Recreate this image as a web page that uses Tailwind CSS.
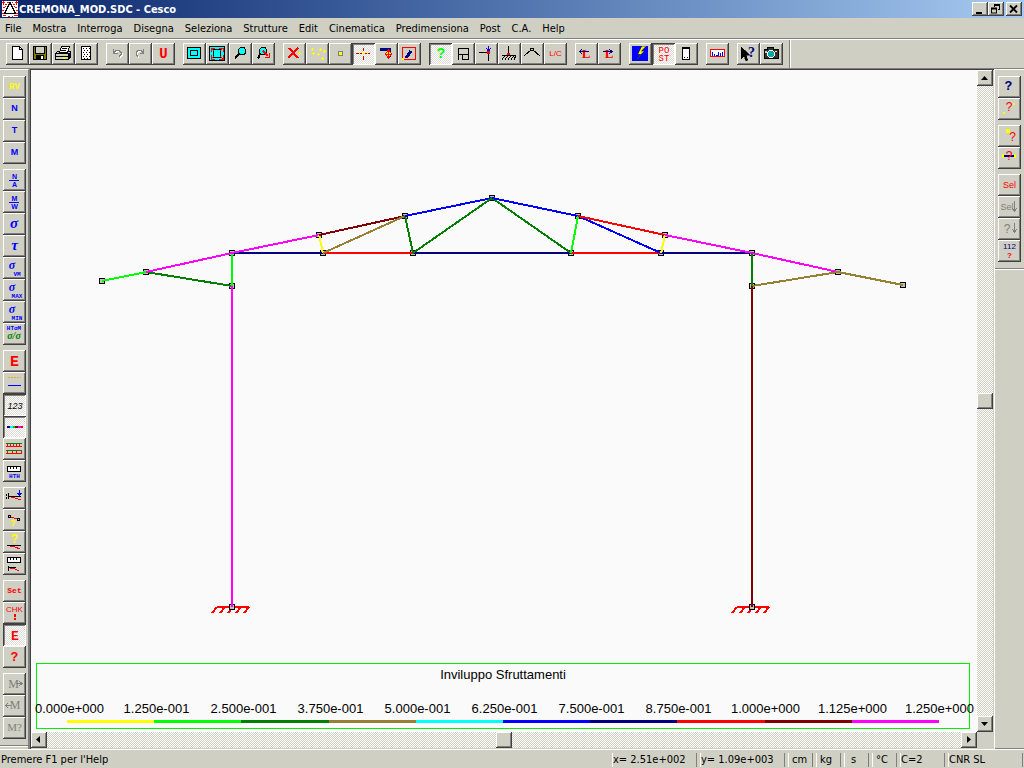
<!DOCTYPE html>
<html lang="it">
<head>
  <meta charset="UTF-8" />
  <meta name="viewport" content="width=device-width, initial-scale=1.0"/>
  <title>CREMONA_MOD.SDC - Cesco</title>
  <script src="https://cdn.jsdelivr.net/npm/@tailwindcss/browser@4"></script>
</head>
<body class="h-screen flex flex-col overflow-hidden bg-[#cfcfc3] text-black text-[11px] leading-[14px] font-['DejaVu_Sans_Condensed','DejaVu_Sans',sans-serif]">

  <!-- title bar -->
  <header class="h-[18px] shrink-0 flex items-center pl-0.5 pr-0.5 bg-linear-to-r from-[#0a246a] via-[#5274ae] to-[#a6caf0]">
    <svg class="w-4 h-4 shrink-0" viewBox="0 0 16 16" shape-rendering="crispEdges">
      <rect width="16" height="16" fill="#fff"/>
      <path d="M0 1.500h3M1.500 0v4M5 1.500h2M10 1.500h1M13 1.500h3M14.500 0v4M1 6.500h2M0 9.500h2M13 6.500h2M14 9.500h2M0 12.500h2M1 14.500h3M6 15.500h2M10 15.500h1M12 14.500h4M14 12.500h2M3 3.500h2M11 3.500h2M3 5.500h1M12 5.500h1" stroke="#f00"/>
      <path d="M8 1.500L2.500 12.500h11z" fill="#fff" stroke="#000"/>
    </svg>
    <h1 class="flex-1 pl-px pt-px text-white font-bold whitespace-nowrap">CREMONA_MOD.SDC - Cesco</h1>
    <div id="caption" class="flex"></div>
  </header>

  <nav class="h-[21px] shrink-0 flex items-center gap-[11px] pl-[5px] pt-px border-b border-[#808080]" id="menu"></nav>

  <!-- main toolbar -->
  <div class="h-[30px] shrink-0 flex border-t border-t-white border-b border-b-[#808080]">
    <div id="toolbar" class="flex gap-2 pl-1.5 pr-1.5 pt-[3px] border-r border-[#808080]"></div>
    <div class="border-l border-white"></div>
  </div>

  <main class="flex-1 min-h-0 flex">
    <aside class="w-[29px] shrink-0 border-r border-t border-t-white border-r-[#808080]">
      <div id="left" class="flex flex-col gap-[5px] pl-[3px] pt-1.5 pb-1.5 border-b border-[#808080]"></div>
      <div class="border-t border-white"></div>
    </aside>

    <section class="flex-1 min-w-0 flex flex-col border-l border-l-[#808080]">
      <div class="flex-1 min-h-0 flex flex-col border-l border-t border-[#404040]">
        <div class="flex-1 min-h-0 flex">
          <div class="flex-1 min-w-0 flex flex-col bg-[#fafafa] overflow-hidden">
            <svg id="model" class="flex-1 min-h-0 w-full" viewBox="31 70 946 593" shape-rendering="crispEdges" role="img" aria-label="Modello"></svg>
            <div class="h-[66px] ml-[5px] mr-[7px] mb-[3px] border border-[#00f000] text-[13px] leading-4 font-['Liberation_Sans',sans-serif]">
              <p class="text-center pt-[3px]">Inviluppo Sfruttamenti</p>
              <div id="values" class="grid grid-cols-11 -ml-[11px] -mr-[14px] mt-[18px] text-center whitespace-nowrap"></div>
              <div class="flex h-[3px] mt-[3px] mx-[30px]">
                <div class="flex-1 bg-[#ffff00]"></div>
                <div class="flex-1 bg-[#00ff00]"></div>
                <div class="flex-1 bg-[#008000]"></div>
                <div class="flex-1 bg-[#968034]"></div>
                <div class="flex-1 bg-[#00ffff]"></div>
                <div class="flex-1 bg-[#0000ff]"></div>
                <div class="flex-1 bg-[#000080]"></div>
                <div class="flex-1 bg-[#ff0000]"></div>
                <div class="flex-1 bg-[#800000]"></div>
                <div class="flex-1 bg-[#ff00ff]"></div>
              </div>
            </div>
          </div>
          <div class="w-4 mr-px flex flex-col bg-[conic-gradient(#ffffff_25%,#cfcfc3_0_50%,#ffffff_0_75%,#cfcfc3_0)] bg-[length:2px_2px]">
            <button aria-label="Su" class="size-4 bg-[#cfcfc3] shadow-[inset_-1px_-1px_#404040,inset_1px_1px_#ffffff,inset_-2px_-2px_#808080]"><svg class="block" viewBox="0 0 16 16"><path d="M4 10h7L7.500 6z"/></svg></button>
            <div class="flex-1"></div>
            <div class="size-4 bg-[#cfcfc3] shadow-[inset_-1px_-1px_#404040,inset_1px_1px_#ffffff,inset_-2px_-2px_#808080]"></div>
            <div class="flex-1"></div>
            <button aria-label="Gi&ugrave;" class="size-4 bg-[#cfcfc3] shadow-[inset_-1px_-1px_#404040,inset_1px_1px_#ffffff,inset_-2px_-2px_#808080]"><svg class="block" viewBox="0 0 16 16"><path d="M4 6h7l-3.500 4z"/></svg></button>
          </div>
        </div>
        <div class="h-[17px] shrink-0 flex pr-[17px] pb-px">
          <div class="flex-1 flex bg-[conic-gradient(#ffffff_25%,#cfcfc3_0_50%,#ffffff_0_75%,#cfcfc3_0)] bg-[length:2px_2px]">
            <button aria-label="Sinistra" class="size-4 bg-[#cfcfc3] shadow-[inset_-1px_-1px_#404040,inset_1px_1px_#ffffff,inset_-2px_-2px_#808080]"><svg class="block" viewBox="0 0 16 16"><path d="M9 4v7L5 7.500z"/></svg></button>
            <div class="flex-1"></div>
            <div class="size-4 bg-[#cfcfc3] shadow-[inset_-1px_-1px_#404040,inset_1px_1px_#ffffff,inset_-2px_-2px_#808080]"></div>
            <div class="flex-1"></div>
            <button aria-label="Destra" class="size-4 bg-[#cfcfc3] shadow-[inset_-1px_-1px_#404040,inset_1px_1px_#ffffff,inset_-2px_-2px_#808080]"><svg class="block" viewBox="0 0 16 16"><path d="M6 4v7l4-3.500z"/></svg></button>
          </div>
        </div>
      </div>
    </section>

    <aside class="w-[30px] shrink-0 flex flex-col border-l border-t border-white">
      <div id="right" class="flex flex-col gap-[5px] pl-[3px] pt-1.5 pb-1.5 border-b border-[#808080]"></div>
      <div class="flex-1 border-t border-t-white border-b border-b-[#808080]"></div>
    </aside>
  </main>

  <footer class="h-[19px] shrink-0 flex border-t border-white pt-[3px] pb-px pr-px gap-[3px] whitespace-nowrap">
    <p class="flex-1 pl-px">Premere F1 per l'Help</p>
    <p class="w-[85px] border-x border-l-white border-r-[#808080]">x= 2.51e+002</p>
    <p class="w-[85px] border-x border-l-white border-r-[#808080]">y= 1.09e+003</p>
    <p class="w-[25px] pl-[3px] border-x border-l-white border-r-[#808080]">cm</p>
    <p class="w-[25px] pl-[3px] border-x border-l-white border-r-[#808080]">kg</p>
    <p class="w-[25px] pl-1.5 border-x border-l-white border-r-[#808080]">s</p>
    <p class="w-[25px] pl-[3px] border-x border-l-white border-r-[#808080]">&deg;C</p>
    <p class="w-[45px] border-x border-l-white border-r-[#808080]">C=2</p>
    <p class="w-[75px] border-x border-l-white border-r-[#808080]">CNR SL</p>
  </footer>

  <script>
    // text inside an icon: string, center x, baseline, size, color
    const t = (s, x, y, size, color, font = 'Liberation Sans', extra = 'font-weight="bold"') =>
      `<text x="${x}" y="${y}" font-size="${size}" fill="${color}" font-family="${font}" text-anchor="middle" ${extra}>${s}</text>`;
    const p = (d, color, w = 1, fill = 'none', dash = 'none') =>
      `<path d="${d}" stroke="${color}" stroke-width="${w}" fill="${fill}" stroke-dasharray="${dash}"/>`;
    const r = (x, y, w, h, fill, stroke = 'none') => `<rect x="${x}" y="${y}" width="${w}" height="${h}" fill="${fill}" stroke="${stroke}"/>`;
    const plus = (x, y, c) => p(`M${x - 1} ${y + .5}h3M${x + .5} ${y - 1}v3`, c);
    const mono = 'Liberation Mono', serif = 'Liberation Serif', sans = 'Liberation Sans';
    const it = 'font-weight="bold" font-style="italic"';
    const thin = '';
    const R = '#f00', B = '#00f', N = '#000080', K = '#000', Y = '#ff0', G = '#808080';

    const lens = (x, y) => p(`M${x - 3} ${y + 3}L6 15.500`, K, 2) +
      r(x - 2, y - 3, 5, 7, '#0ff') + r(x - 3, y - 2, 7, 5, '#0ff') +
      p(`M${x - 2} ${y - 3.5}h5M${x - 2} ${y + 3.5}h5M${x - 3.5} ${y - 2}v5M${x + 3.5} ${y - 2}v5M${x - 3} ${y - 2.5}h1M${x + 2} ${y - 2.5}h1M${x - 3} ${y + 2.5}h1M${x + 2} ${y + 2.5}h1`, K);
    const ground = (y) => p(`M4 ${y}h14`, K) + p(`M7 ${y}l-3 4M10 ${y}l-3 4M13 ${y}l-3 4M16 ${y}l-3 4M18 ${y}l-2 4`, K);
    const ruler = (y) => r(4.5, y + .5, 13, 5, '#fff', K) + p(`M7.500 ${y}v3M10.500 ${y}v3M13.500 ${y}v3`, K);
    // sigma with a small subscript below it
    const sigmaSub = (sub) => t('σ', 9, 12, 12, B, serif, it) + t(sub, 14, 19, 6, B, mono);

    // [label, drawing, pressed]
    const toolbar = [
      [
        ['Nuovo', p('M6.500 3.500h7l3 3v10h-10z', K, 1, '#fff') + p('M13.500 3.500v3h3', K)],
        ['Salva', r(4.5, 3.5, 13, 13, '#808000', K) + r(7, 4, 8, 6, '#cfcfc3') + p('M6.500 4v6h9V4', K) + r(7, 12, 8, 5, K) + r(12, 13, 2, 3, '#fff')],
        ['Stampa', p('M7.500 9.500l2-6h8l-2 6z', K, 1, '#fff') + p('M10 5.500h5M9 7.500h5', K) + p('M3.500 10.500l2-2h2M16 8.500h2.500v6l-2 2', K) + r(3.5, 10.5, 13, 6, '#cfcfc3', K) + p('M4 13.500h12M17.500 10v5', K) + r(11, 14, 3, 2, Y)],
        ['Griglia', r(6.5, 3.5, 9, 13, '#fff', K) + p('M8 5.500h7M8 9.500h7M8 13.500h7', K, 1, 'none', '1 2') + p('M9 7.500h6M9 11.500h6M9 15.500h6', K, 1, 'none', '1 2')]
      ],
      [
        ['Annulla', p('M9 10.500l2-2h3l2 2v2l-2 2', '#fff') + p('M8 9.500l2-2h3l2 2v2l-2 2M7.500 6v4.500h4', G)],
        ['Ripeti', p('M15 10.500l-2-2h-3l-2 2v2l2 2', '#fff') + p('M14 9.500l-2-2H9l-2 2v2l2 2M14.500 6v4.500h-4', G)],
        ['Unisci', t('U', 11.5, 15, 14, R, mono)]
      ],
      [
        ['Zoom finestra', r(4.5, 4.5, 13, 11, '#0ff', K) + r(7.5, 7.5, 7, 5, '#0ff', K)],
        ['Zoom tutto', r(3.5, 3.5, 15, 14, '#0ff', K) + r(7.5, 6.5, 7, 8, '#0ff', K) + p('M5 9V5h4M5 5l3 3M13 5h4v4M17 5l-3 3M5 12v4h4M5 16l3-3M17 12v4h-4M17 16l-3-3', R)],
        ['Zoom', lens(13, 8)],
        ['Zoom dinamico', lens(11, 8) + p('M11 8l5 5', R, 2) + p('M17.500 10v4.500H13', R)]
      ],
      [
        ['Cancella', p('M6 5l9 10M15 5L5 15', R, 2) + plus(16, 10, Y)],
        ['Nodi', [[6, 6], [14, 6], [18, 8], [7, 10], [12, 11], [16, 15]].map(([x, y]) => plus(x, y, Y)).join('')],
        ['Nodo', r(9.5, 8.5, 4, 4, Y, G)],
        ['Mirino', p('M4 10.500h3M8 10.500h2M13 10.500h2M16 10.500h2M11.500 5v3M11.500 13v4', '#c00') + plus(11, 10, Y) + p('M7 10.500h1M15 10.500h1', Y), 1],
        ['Sposta', p('M5 6.500h9v7', N, 3) + p('M13.500 7l3.500 4-3.500 4-3.500-4z', R, 1, Y) + p('M13.500 8v6M11 11h5', R)],
        ['Disegna', r(4.5, 4.5, 13, 12, 'none', R) + p('M8 15l5-7', N, 3) + r(4, 15, 2, 2, Y)]
      ],
      [
        ['Interroga', t('?', 12, 15, 14, '#0f0', mono), 1],
        ['Telaio', p('M6.500 17V5.500h10v11h-6v-5M6.500 11.500h10', K)],
        ['Carichi nodo', p('M4 9.500h10M13.500 9v9', K) + p('M13.500 3v5M11 5l2.500 3L16 5', B) + r(12, 8, 3, 3, R)],
        ['Vincoli', p('M10.500 3v9', K) + r(9, 10, 3, 3, R) + ground(12.5)],
        ['Cerniere', p('M3 13l7-6M12 7l7 6', K) + r(9.5, 5.5, 3, 2, 'none', K)],
        ['Aste L/C', t('L/C', 11.5, 13, 8, R, sans, thin)]
      ],
      [
        ['Precedente', t('L', 11, 15, 13, R, serif) + p('M5 8.500h9M7 6L4.500 8.500 7 11', N)],
        ['Successivo', t('L', 11, 15, 13, R, serif) + p('M5 8.500h9M11 6l3 2.500-3 2.500', N)]
      ],
      [
        ['Calcola', r(3, 3, 16, 15, B) + p('M17 3l-5 5h3L8 16l4-5H9l4-8z', '#550', .5, Y)],
        ['Post', t('PO', 12, 10, 9, R, mono, thin) + t('ST', 12, 18, 9, R, mono, thin), 1],
        ['Relazione', r(7.5, 4.5, 7, 12, '#fff', K) + r(7, 4, 8, 2, K) + r(9, 14, 1, 1, K) + r(12, 14, 1, 1, K)]
      ],
      [['Misura', r(4.5, 6.5, 14, 7, '#fff', R) + p('M6.500 9v4M8.500 11v2M10 12.500h2M12.500 9v4M14.500 10v3M16.500 9v4', B)]],
      [
        ['Guida rapida', p('M4 4v12l3-3 2 5 2-1-2-5h4z', K, .5, K) + t('?', 14.5, 14, 14, N, serif)],
        ['Foto', p('M4 6.500h3l1-2h5l1 2h4v9H4z', K, 1, '#333') + `<circle cx="11" cy="11" r="3.5" fill="#0aa" stroke="#fff"/>` + r(5, 8, 2, 2, '#cfcfc3') + r(15, 8, 2, 1, Y)]
      ]
    ];

    const left = [
      [
        ['RV', t('RV', 11.5, 13, 9, Y, mono)],
        ['N', t('N', 11.5, 13, 9, B)],
        ['T', t('T', 11.5, 13, 9, B)],
        ['M', t('M', 11.5, 13, 9, B)]
      ],
      [
        ['N/A', t('N', 11.5, 10, 7, B) + p('M6 11.500h10', B) + t('A', 11.5, 18, 7, B)],
        ['M/W', t('M', 11.5, 10, 7, B) + p('M6 11.500h10', B) + t('W', 11.5, 18, 7, B)],
        ['Sigma', t('σ', 11, 15, 15, B, serif, it)],
        ['Tau', t('τ', 11.5, 15, 15, B, serif, it)],
        ['Sigma VM', sigmaSub('VM')],
        ['Sigma max', sigmaSub('MAX')],
        ['Sigma min', sigmaSub('MIN')],
        ['Tutte', t('HTσM', 11, 7, 6, B, mono) + t('σ/σ', 11, 16, 10, '#008000', serif, it)]
      ],
      [
        ['Estremi', t('E', 11.5, 16, 15, R, mono)],
        ['Linee', p('M5 5.500h13', '#fa0', 1, 'none', '2 1') + p('M5 13.500h13', B)],
        ['Numeri', t('123', 12, 15, 9, K, sans, 'font-style="italic"'), 1],
        ['Colori', r(4, 10, 3, 2, N) + r(7, 10, 3, 2, '#0ff') + r(10, 10, 2, 2, '#0c0') + r(12, 10, 3, 2, '#800000') + r(15, 10, 3, 2, '#f0f') + r(18, 10, 2, 2, R), 1],
        ['Diagrammi', p('M3 5.500h16M3 12.500h16', '#008000') + p('M3 8.500h16M3 15.500h16M4.500 6v3M7.500 6v3M10.500 6v3M13.500 6v3M16.500 6v3M4.500 13v3M9.500 13v3M13.500 13v3M18.500 13v3', R)],
        ['Scala', ruler(6) + t('HTH', 11.5, 18, 6, B, mono)]
      ],
      [
        ['Deformata', p('M5 9.500h13M5 6v6M4 7l-1 2M4 10l-1 2', K) + p('M8 10l4 1 6 2', R) + p('M16.500 3v5M14.500 6l2 2 2-2', B)],
        ['Spostamenti', r(5.5, 6.5, 2, 2, 'none', K) + r(14.5, 9.5, 2, 2, 'none', K) + p('M8 8l6 2', R) + t('?', 10, 17, 9, Y)],
        ['Interroga deformata', t('?', 11.5, 12, 12, Y) + p('M4 14.500h14', K) + p('M7 15l5 1 5 2', R)],
        ['Scala deformata', ruler(4) + p('M5 14.500h8M5.500 13v5', K) + p('M7 15l5 1 4 2', R)]
      ],
      [
        ['Set', t('Set', 11.5, 13, 8, R, mono)],
        ['Verifica', t('CHK', 11.5, 10, 8, R, sans, thin) + p('M11.500 12v3M11.500 16v2', R, 2)],
        ['E', t('E', 12, 16, 13, R, mono), 1],
        ['Info', t('?', 11.5, 15, 13, R, mono)]
      ],
      [
        ['Salva M', t('M', 10.5, 15, 12, G, serif, thin) + p('M13 10.500h6M16 8l3 2.500-3 2.500', G)],
        ['Leggi M', t('M', 12, 14, 12, G, serif, thin) + p('M2 10.500h6M5 8l-2 2.500L5 13', G)],
        ['Info M', t('M?', 11.5, 14, 11, G, serif, thin)]
      ]
    ];

    const right = [
      [
        ['Interroga', t('?', 10.5, 14, 13, N, mono)],
        ['Interroga asta', t('?', 11, 13, 12, R, sans, thin) + r(5, 14, 2, 2, Y) + r(15, 5, 2, 2, Y)]
      ],
      [
        ['Interroga nodo', r(8, 4, 4, 4, Y) + t('?', 14.5, 16, 12, R, sans, thin)],
        ['Interroga elemento', r(5, 8, 13, 2, N) + r(4, 7, 2, 4, Y) + r(16, 7, 2, 4, Y) + t('?', 11, 13, 12, R, sans, thin)]
      ],
      [
        ['Seleziona', t('Sel', 11.5, 14, 9, R, sans, thin)],
        ['Seleziona successivo', t('Sel', 9, 14, 9, G, sans, thin) + p('M16.500 5v10M14 12l2.500 3 2.500-3', G)],
        ['Interroga successivo', t('?', 9, 15, 12, G, sans, thin) + p('M16.500 5v9M14 11l2.500 3 2.500-3', G)],
        ['Numero', t('112', 11.5, 9, 8, N, sans, thin) + t('?', 11.5, 18, 8, R)]
      ]
    ];

    function button([label, drawing, pressed]) {
      const cls = pressed
        ? "block w-[23px] h-[22px] bg-[conic-gradient(#ffffff_25%,#dcdcd4_0_50%,#ffffff_0_75%,#dcdcd4_0)] bg-[length:2px_2px] shadow-[inset_1px_1px_#404040,inset_-1px_-1px_#ffffff,inset_2px_2px_#808080]"
        : "block w-[23px] h-[22px] bg-[#cfcfc3] shadow-[inset_-1px_-1px_#404040,inset_1px_1px_#ffffff,inset_-2px_-2px_#808080]";
      return `<button class="${cls}" aria-label="${label}" aria-pressed="${!!pressed}"><svg class="block w-[23px] h-[22px]" viewBox="0 0 23 22" shape-rendering="crispEdges">${drawing}</svg></button>`;
    }

    const fill = (id, groups, cls) => {
      document.getElementById(id).innerHTML = groups.map(g => `<div class="${cls}">${g.map(button).join('')}</div>`).join('');
    };
    fill('toolbar', toolbar, 'flex');
    fill('left', left, 'flex flex-col');
    fill('right', right, 'flex flex-col');

    document.getElementById('menu').innerHTML =
      ['File', 'Mostra', 'Interroga', 'Disegna', 'Seleziona', 'Strutture', 'Edit', 'Cinematica', 'Predimensiona', 'Post', 'C.A.', 'Help']
        .map(m => `<button>${m}</button>`).join('');

    document.getElementById('caption').innerHTML = [
      ['Riduci', '<path d="M4 10h6v2H4z"/>', 'w-4'],
      ['Ripristina', '<path d="M6 2h6v6h-2V7h1V4H7v1H6zM3 5.500h6v6H3zM4 7.500v3h4v-3z" fill-rule="evenodd"/>', 'w-4 mr-0.5'],
      ['Chiudi', '<path d="M4 3.500l7 7M11 3.500l-7 7" stroke="#000" stroke-width="1.8"/>', 'w-4']
    ].map(([label, d, cls]) => `<button aria-label="${label}" class="${cls} h-3.5 bg-[#cfcfc3] shadow-[inset_-1px_-1px_#404040,inset_1px_1px_#ffffff,inset_-2px_-2px_#808080]"><svg class="block w-4 h-3.5" viewBox="0 0 16 14">${d}</svg></button>`).join('');

    document.getElementById('values').innerHTML =
      ['0.000e+000', '1.250e-001', '2.500e-001', '3.750e-001', '5.000e-001', '6.250e-001', '7.500e-001', '8.750e-001', '1.000e+000', '1.125e+000', '1.250e+000']
        .map(v => `<span>${v}</span>`).join('');

    // truss model
    const nodes = {
      a: [102, 281], b: [146, 272], c: [232, 253], d: [232, 286], e: [319, 235], f: [323, 253],
      g: [405, 216], h: [413, 253], i: [492, 198], j: [571, 253], k: [578, 216], l: [661, 253],
      m: [665, 235], n: [752, 253], o: [752, 286], p: [838, 272], q: [903, 285],
      s: [232, 607], t: [752, 607]
    };
    const bars = [
      ['cf', '#000080'], ['fh', '#ff0000'], ['hj', '#000080'], ['jl', '#ff0000'], ['ln', '#000080'],
      ['ab', '#00ff00'], ['bd', '#008000'], ['cd', '#00ff00'], ['bc', '#ff00ff'], ['ce', '#ff00ff'],
      ['ef', '#ffff00'], ['eg', '#800000'], ['fg', '#968034'], ['gh', '#008000'], ['gi', '#0000ff'],
      ['hi', '#008000'], ['ij', '#008000'], ['ik', '#0000ff'], ['jk', '#00ff00'], ['kl', '#0000ff'],
      ['km', '#ff0000'], ['lm', '#ffff00'], ['mn', '#ff00ff'], ['np', '#ff00ff'], ['no', '#008000'],
      ['op', '#968034'], ['pq', '#968034'], ['ds', '#ff00ff'], ['ot', '#800000']
    ];
    const supports = ['s', 't'].map(k => {
      const [x, y] = nodes[k];
      return p([-20, -12, -4, 4, 12].map(o => `M${x + o} ${y + 6}l5 -6`).join('') + `M${x - 15} ${y}h32`, R, 2);
    });
    const points = Object.values(nodes).map(([x, y]) => r(x - 2.5, y - 2.5, 5, 5, '#c0c0c0', K));
    const lines = bars.map(([ab, color]) => {
      const [x1, y1] = nodes[ab[0]], [x2, y2] = nodes[ab[1]];
      return `<line x1="${x1}" y1="${y1}" x2="${x2}" y2="${y2}" stroke="${color}" stroke-width="2"/>`;
    });
    document.getElementById('model').innerHTML = [...supports, ...points, ...lines].join('');
  </script>
</body>
</html>
